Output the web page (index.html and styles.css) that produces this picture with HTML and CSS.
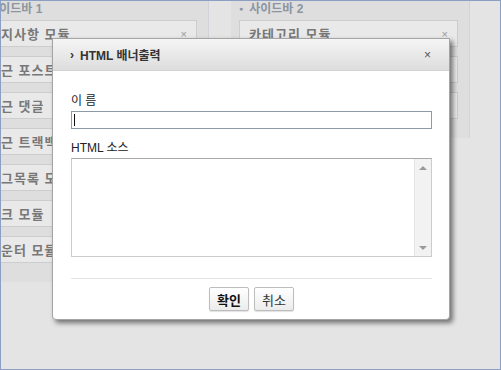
FILE: index.html
```html
<!DOCTYPE html>
<html>
<head lang="ko">
    <meta charset="UTF-8">
    <title>HTML 배너출력</title>
    <link rel="stylesheet" href="styles.css">
</head>
<body>
    <div id="frame">
        <div id="columns">
            <div class="sidebar">
                <div class="sidebar-title"><span class="dot">●</span>사이드바 1</div>
                <ul class="modules">
                    <li>공지사항 모듈<span class="del">×</span></li>
                    <li>최근 포스트<span class="del">×</span></li>
                    <li>최근 댓글<span class="del">×</span></li>
                    <li>최근 트랙백<span class="del">×</span></li>
                    <li>태그목록 모듈<span class="del">×</span></li>
                    <li>링크 모듈<span class="del">×</span></li>
                    <li>카운터 모듈<span class="del">×</span></li>
                </ul>
            </div>
            <div class="sidebar">
                <div class="sidebar-title"><span class="dot">●</span>사이드바 2</div>
                <ul class="modules">
                    <li>카테고리 모듈<span class="del">×</span></li>
                    <li>달력 모듈<span class="del">×</span></li>
                    <li>검색 모듈<span class="del">×</span></li>
                </ul>
            </div>
        </div>

        <!-- 배너 입력 레이어 -->
        <div id="dialog">
            <div class="dialog-head">
                <span class="dialog-title"><span class="arrow">›</span>HTML 배너출력</span>
                <span class="close">×</span>
            </div>
            <div class="dialog-body">
                <label class="field-label">이 름</label>
                <div class="input"><span class="caret"></span></div>

                <label class="field-label source-label">HTML 소스</label>
                <div class="source">
                    <div class="source-text"></div>
                    <div class="scrollbar">
                        <span class="up"></span>
                        <span class="down"></span>
                    </div>
                </div>

                <div class="buttons">
                    <button class="btn btn-ok">확인</button>
                    <button class="btn">취소</button>
                </div>
            </div>
        </div>
    </div>
</body>
</html>
```

FILE: styles.css
```css
*{
    margin: 0;
    padding: 0;
    box-sizing: border-box;
}
li{
    list-style: none;
}
body{
    font-family: "Liberation Sans", "Noto Sans CJK KR", sans-serif;
    background: #e4e4e4;
}
#frame{
    width: 501px;
    height: 370px;
    border: 1px solid #8c9fc3;
    background: #e4e4e4;
    /*레이어 기준*/
    position: relative;
    overflow: hidden;
}
#columns{
    display: flex;
    gap: 22px;
    margin-left: -31px;
    align-items: flex-start;
}
.sidebar{
    width: 239px;
    background: #dedede;
    border-right: 1px solid #d0d3d8;
    padding: 0 11px 19px 8px;
}
.sidebar-title{
    height: 19px;
    line-height: 16px;
    font-size: 12px;
    font-weight: bold;
    color: #8d959f;
}
.sidebar-title .dot{
    font-size: 7px;
    margin-right: 6px;
    vertical-align: 2px;
}
.modules li{
    height: 27px;
    margin-bottom: 9px;
    border: 1px solid #cdcdcd;
    background: #e9e9e9;
    padding: 0 8px 0 9px;
    display: flex;
    justify-content: space-between;
    align-items: center;
    font-size: 13px;
    letter-spacing: 1px;
    color: #787878;
    font-weight: bold;
}
.modules li:last-child{
    margin-bottom: 0;
}
.modules .del{
    font-size: 11px;
    color: #9a9a9a;
    font-weight: normal;
}

#dialog{
    position: absolute;
    left: 51px;
    top: 37px;
    width: 398px;
    height: 282px;
    background: #fff;
    border: 1px solid #a4a4a4;
    border-radius: 0 0 4px 4px;
    box-shadow: 3px 3px 5px rgba(0, 0, 0, 0.5);
}
.dialog-head{
    height: 32px;
    background: linear-gradient(#f5f5f5, #dddddd);
    border-bottom: 1px solid #d2d2d2;
    display: flex;
    justify-content: space-between;
    align-items: center;
    padding: 0 18px 0 17px;
}
.dialog-title{
    font-size: 12px;
    font-weight: bold;
    color: #333;
}
.dialog-title .arrow{
    margin-right: 6px;
    vertical-align: 1px;
}
.close{
    font-size: 12px;
    color: #555;
}
.dialog-body{
    padding: 22px 17px 0 18px;
}
.field-label{
    display: block;
    font-size: 12px;
    line-height: 17px;
    color: #222;
}
.input{
    height: 18px;
    margin-top: 1px;
    border: 1px solid #8d99a6;
    padding: 2px 0 0 2px;
}
.caret{
    display: block;
    width: 1px;
    height: 12px;
    background: #111;
}
.source-label{
    margin-top: 11px;
}
.source{
    height: 99px;
    margin-top: 1px;
    border: 1px solid #cccccc;
    border-top-color: #a9a9a9;
    display: flex;
}
.source-text{
    flex: 1;
}
.scrollbar{
    width: 17px;
    background: #f2f2f2;
    border-left: 1px solid #e6e6e6;
    display: flex;
    flex-direction: column;
    justify-content: space-between;
    align-items: center;
    padding: 7px 0 6px;
}
.scrollbar .up{
    border: 4px solid transparent;
    border-bottom: 4px solid #9a9a9a;
    border-top: 0;
}
.scrollbar .down{
    border: 4px solid transparent;
    border-top: 4px solid #9a9a9a;
    border-bottom: 0;
}
.buttons{
    margin-top: 21px;
    border-top: 1px solid #e4e4e4;
    padding-top: 8px;
    display: flex;
    justify-content: center;
    gap: 5px;
}
.btn{
    height: 24px;
    padding: 0 7px;
    font-family: "Liberation Sans", "Noto Sans CJK KR", sans-serif;
    font-size: 13px;
    color: #333;
    background: linear-gradient(#ffffff, #ececec);
    border: 1px solid #bdbdbd;
    border-radius: 2px;
    box-shadow: 0 1px 1px rgba(0, 0, 0, 0.12);
}
.btn-ok{
    font-weight: bold;
    color: #111;
}
```
